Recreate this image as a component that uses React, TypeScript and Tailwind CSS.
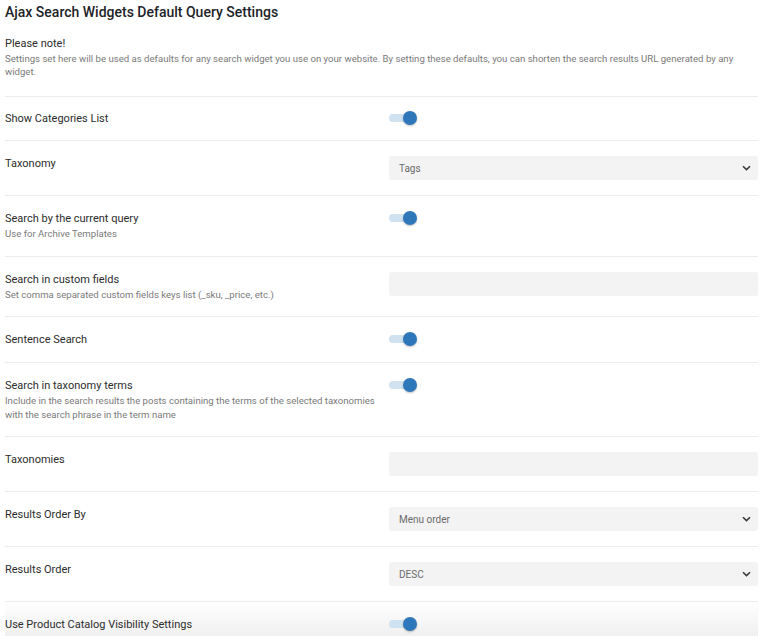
const font = { fontFamily: 'Roboto, "Noto Sans", sans-serif' }

type Row = {
  label: string
  desc?: string[]
  control: 'toggle' | 'select' | 'input'
  value?: string
}

const rows: Row[] = [
  { label: 'Show Categories List', control: 'toggle' },
  { label: 'Taxonomy', control: 'select', value: 'Tags' },
  { label: 'Search by the current query', desc: ['Use for Archive Templates'], control: 'toggle' },
  { label: 'Search in custom fields', desc: ['Set comma separated custom fields keys list (_sku, _price, etc.)'], control: 'input' },
  { label: 'Sentence Search', control: 'toggle' },
  {
    label: 'Search in taxonomy terms',
    desc: [
      'Include in the search results the posts containing the terms of the selected taxonomies',
      'with the search phrase in the term name',
    ],
    control: 'toggle',
  },
  { label: 'Taxonomies', control: 'input' },
  { label: 'Results Order By', control: 'select', value: 'Menu order' },
  { label: 'Results Order', control: 'select', value: 'DESC' },
  { label: 'Use Product Catalog Visibility Settings', control: 'toggle' },
]

const Toggle = () => (
  <div className="relative h-[14px] w-[28px]">
    <div className="absolute left-0 top-[3px] h-[8px] w-[24px] rounded-full bg-[#d0e2f0]" />
    <div className="absolute left-[14px] top-0 h-[14px] w-[14px] rounded-full bg-[#2f77bb] shadow-[0_1px_2px_rgba(0,0,0,0.25)]" />
  </div>
)

const Select = ({ value }: { value?: string }) => (
  <div className="flex h-[24px] w-full items-center justify-between rounded-[3px] bg-[#f3f3f3] pl-[10px] pr-[7px]">
    <span className="text-[10px] text-[#6b6b6b]">{value}</span>
    <svg width="9" height="6" viewBox="0 0 9 6" fill="none">
      <path d="M1 1.2L4.5 4.6L8 1.2" stroke="#3a3a3a" strokeWidth="1.6" />
    </svg>
  </div>
)

export default function App() {
  return (
    <div className="min-h-[636px] w-[760px] bg-white pl-[5px] pr-[2px]" style={font}>
      <h1 className="pt-[2px] text-[14px] font-medium leading-[20px] text-[#1d2327]">
        Ajax Search Widgets Default Query Settings
      </h1>
      <div className="mt-[14px] mb-[18px]">
        <div className="text-[11px] leading-[16px] text-[#2c2c2c]">Please note!</div>
        <p className="text-[9.6px] leading-[13px] text-[#7a7a7a]">
          Settings set here will be used as defaults for any search widget you use on your website. By setting these defaults, you can shorten the search results URL generated by any widget.
        </p>
      </div>
      {rows.map((r, i) => (
        <div
          key={r.label}
          className={
            'grid grid-cols-[384px_1fr] border-t border-[#ececec] ' +
            (i === 0 ? 'py-[14px] ' : 'py-[15px] ') +
            (i === rows.length - 1 ? 'bg-gradient-to-b from-white to-[#ebebeb]' : '')
          }
        >
          <div>
            <div className="text-[11px] leading-[15px] text-[#2c2c2c]">{r.label}</div>
            {r.desc && (
              <div className="mt-[1px]">
                {r.desc.map((d) => (
                  <div key={d} className="text-[9.6px] leading-[13.5px] text-[#7a7a7a]">
                    {d}
                  </div>
                ))}
              </div>
            )}
          </div>
          <div>
            {r.control === 'toggle' && <Toggle />}
            {r.control === 'select' && <Select value={r.value} />}
            {r.control === 'input' && <div className="h-[24px] w-full rounded-[3px] bg-[#f3f3f3]" />}
          </div>
        </div>
      ))}
    </div>
  )
}
